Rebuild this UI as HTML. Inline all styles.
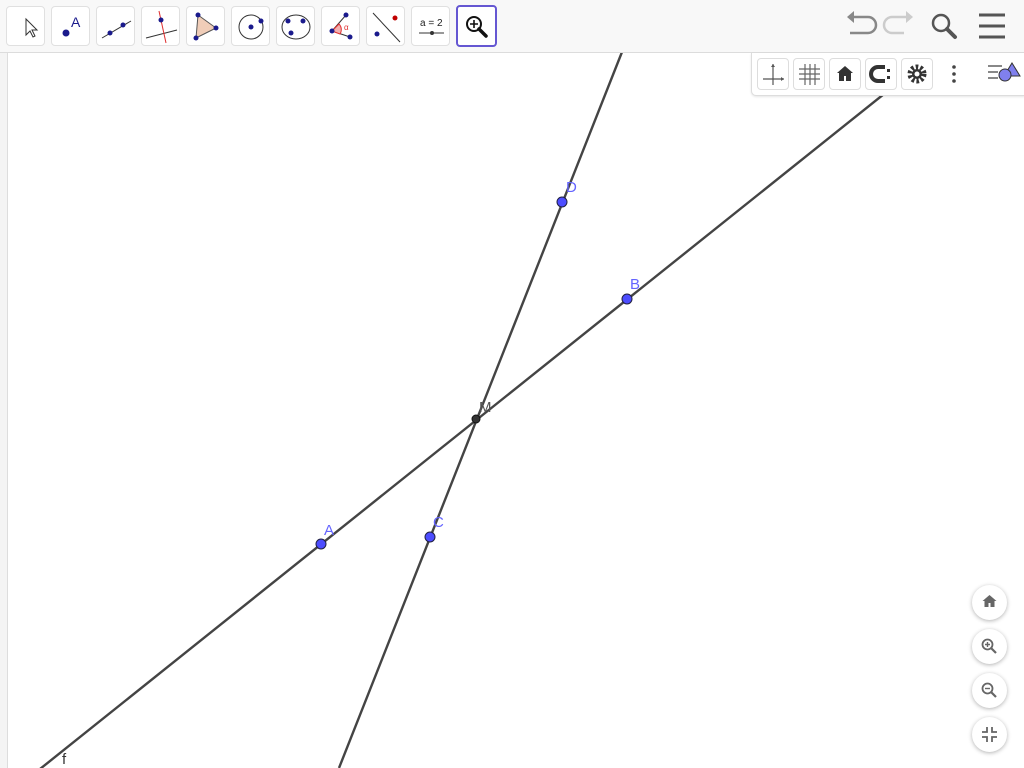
<!DOCTYPE html>
<html><head><meta charset="utf-8"><style>
body{margin:0;width:1024px;height:768px;overflow:hidden;background:#fff;font-family:"Liberation Sans",sans-serif;position:relative}
#tb{position:absolute;left:0;top:0;width:1024px;height:52px;background:#f8f8f8;border-bottom:1px solid #dcdcdc}
.b{position:absolute;top:6px;width:37px;height:38px;background:#fff;border:1px solid #e0e0e0;border-radius:4px}
.b svg{position:absolute;left:0;top:0}
#strip{position:absolute;left:0;top:53px;width:7px;height:715px;background:#f4f4f4;border-right:1px solid #ddd}
#panel{position:absolute;left:751px;top:53px;width:273px;height:42px;background:#fff;border:1px solid #ddd;border-right:none;border-top:none;border-radius:0 0 0 5px;box-shadow:0 1px 2px rgba(0,0,0,.1)}
.p{position:absolute;top:5px;width:30px;height:30px;border:1px solid #ddd;border-radius:4px;background:#fff}
.p svg{position:absolute;left:0;top:0}
.c{position:absolute;left:972px;width:35px;height:35px;border-radius:50%;background:#fff;box-shadow:0 1px 4px rgba(0,0,0,.3)}
.c svg{position:absolute;left:0;top:0}
</style></head><body>
<svg width="1024" height="768" style="position:absolute;left:0;top:0">
<line x1="30" y1="777" x2="1024" y2="-18" stroke="#444" stroke-width="2.4"/>
<line x1="622" y1="52" x2="339" y2="768" stroke="#444" stroke-width="2.4"/>
<g stroke="#202040" stroke-width="1" fill="#4d4dff">
<circle cx="321" cy="544" r="5"/><circle cx="627" cy="299" r="5"/><circle cx="562" cy="202" r="5"/><circle cx="430" cy="537" r="5"/>
</g>
<circle cx="476" cy="419" r="4" fill="#333" stroke="#111"/>
<g font-family="Liberation Sans" font-size="15" fill="#6464ff">
<text x="324" y="535">A</text><text x="630" y="289">B</text><text x="433" y="527">C</text><text x="566" y="192">D</text>
</g>
<text x="479" y="412" font-size="15" fill="#555" font-family="Liberation Sans">M</text>
<text x="62" y="764" font-size="15" fill="#333" font-family="Liberation Sans">f</text>
</svg>
<div id="strip"></div>
<div id="tb">
<div class="b" style="left:6px"><svg width="38" height="38"><path d="M19 12v16l4-4 3 6 2-1-3-6h5z" fill="#fff" stroke="#333" stroke-width="1"/></svg></div>
<div class="b" style="left:51px"><svg width="38" height="38"><circle cx="14" cy="26" r="3.5" fill="#1a1a8c"/><text x="19" y="20" font-size="14" fill="#1a1a8c" font-family="Liberation Sans">A</text></svg></div>
<div class="b" style="left:96px"><svg width="38" height="38"><line x1="5" y1="31" x2="34" y2="14" stroke="#333"/><circle cx="13" cy="26" r="2.5" fill="#1a1a8c"/><circle cx="26" cy="18" r="2.5" fill="#1a1a8c"/></svg></div>
<div class="b" style="left:141px"><svg width="38" height="38"><line x1="4" y1="31" x2="35" y2="23" stroke="#333"/><line x1="17" y1="4" x2="24" y2="36" stroke="#e03030"/><circle cx="19" cy="13" r="2.5" fill="#1a1a8c"/></svg></div>
<div class="b" style="left:186px"><svg width="38" height="38"><path d="M11 8L29 21 9 31z" fill="#f0cdb8" stroke="#555"/><circle cx="11" cy="8" r="2.5" fill="#1a1a8c"/><circle cx="29" cy="21" r="2.5" fill="#1a1a8c"/><circle cx="9" cy="31" r="2.5" fill="#1a1a8c"/></svg></div>
<div class="b" style="left:231px"><svg width="38" height="38"><circle cx="19" cy="20" r="12" fill="none" stroke="#333"/><circle cx="19" cy="20" r="2.5" fill="#1a1a8c"/><circle cx="29" cy="14" r="2.5" fill="#1a1a8c"/></svg></div>
<div class="b" style="left:276px"><svg width="38" height="38"><ellipse cx="19" cy="20" rx="14" ry="12" fill="none" stroke="#333"/><circle cx="11" cy="14" r="2.5" fill="#1a1a8c"/><circle cx="26" cy="14" r="2.5" fill="#1a1a8c"/><circle cx="14" cy="26" r="2.5" fill="#1a1a8c"/></svg></div>
<div class="b" style="left:321px"><svg width="38" height="38"><path d="M10 24L24 8M10 24L28 30" stroke="#333" fill="none"/><path d="M10 24L17 17A8 8 0 0 1 18 27z" fill="#f3b0b0" stroke="#e03030"/><circle cx="24" cy="8" r="2.5" fill="#1a1a8c"/><circle cx="10" cy="24" r="2.5" fill="#1a1a8c"/><circle cx="28" cy="30" r="2.5" fill="#1a1a8c"/><text x="22" y="23" font-size="8" fill="#e03030">α</text></svg></div>
<div class="b" style="left:366px"><svg width="38" height="38"><line x1="6" y1="6" x2="33" y2="35" stroke="#333"/><circle cx="28" cy="11" r="2.5" fill="#c00000"/><circle cx="10" cy="27" r="2.5" fill="#1a1a8c"/></svg></div>
<div class="b" style="left:411px"><svg width="38" height="38"><text x="8" y="19" font-size="10" fill="#222" font-family="Liberation Sans">a = 2</text><line x1="7" y1="26" x2="32" y2="26" stroke="#333"/><circle cx="20" cy="26" r="2" fill="#333"/></svg></div>
<div class="b" style="left:456px;border:2px solid #6557d2;top:5px"><svg width="38" height="38"><circle cx="16" cy="17" r="7" fill="none" stroke="#111" stroke-width="2"/><path d="M16 13v8M12 17h8" stroke="#111" stroke-width="1.6"/><path d="M21 22l7 7" stroke="#111" stroke-width="3.5" stroke-linecap="round"/></svg></div>
<svg width="180" height="52" style="position:absolute;left:840px;top:0">
<path d="M12 17h16a8 8 0 0 1 0 16H10" fill="none" stroke="#888" stroke-width="2.5"/><path d="M7 17l7-6v12z" fill="#888"/>
<path d="M68 17H52a8 8 0 0 0 0 16h12" fill="none" stroke="#ccc" stroke-width="2.5"/><path d="M73 17l-7-6v12z" fill="#ccc"/>
<circle cx="101" cy="23" r="8" fill="none" stroke="#555" stroke-width="2.5"/><path d="M107 29l8 8" stroke="#555" stroke-width="4" stroke-linecap="round"/>
<path d="M139 15h26M139 26h26M139 37h26" stroke="#555" stroke-width="3"/>
</svg>
</div>
<div id="panel">
<div class="p" style="left:5px"><svg width="30" height="30"><path d="M15 5v21M5 20h21" stroke="#555" stroke-width="1.2"/><path d="M26 20l-3-2v4zM15 5l-2 3h4z" fill="#555"/></svg></div>
<div class="p" style="left:41px"><svg width="30" height="30"><path d="M11 5v21M16 5v21M21 5v21M5 10h21M5 15h21M5 20h21" stroke="#666" stroke-width="1.2"/></svg></div>
<div class="p" style="left:77px"><svg width="30" height="30"><path d="M15 7l-8 7h2v8h5v-5h2v5h5v-8h2z" fill="#333"/></svg></div>
<div class="p" style="left:113px"><svg width="30" height="30"><path d="M19 8h-7a7 7 0 0 0 0 14h7" fill="none" stroke="#333" stroke-width="4"/><rect x="21" y="10" width="3" height="3" fill="#333"/><rect x="21" y="17" width="3" height="3" fill="#333"/></svg></div>
<div class="p" style="left:149px"><svg width="30" height="30"><circle cx="15" cy="15" r="7" fill="none" stroke="#333" stroke-width="5" stroke-dasharray="2.5 2"/><circle cx="15" cy="15" r="5" fill="#333"/><circle cx="15" cy="15" r="2.5" fill="#fff"/></svg></div>
<svg width="20" height="30" style="position:absolute;left:192px;top:6px"><circle cx="10" cy="8" r="1.8" fill="#444"/><circle cx="10" cy="15" r="1.8" fill="#444"/><circle cx="10" cy="22" r="1.8" fill="#444"/></svg>
<svg width="40" height="30" style="position:absolute;left:232px;top:6px"><path d="M4 7h14M4 13h10M4 19h10" stroke="#888" stroke-width="2"/><path d="M28 4l8 13H20z" fill="#8080ee" stroke="#333"/><circle cx="21" cy="16" r="6" fill="#8080ee" stroke="#333"/></svg>
</div>
<div class="c" style="top:585px"><svg width="35" height="35"><path d="M17.5 10l-7 6h2v6h4v-4h2v4h4v-6h2z" fill="#666"/></svg></div>
<div class="c" style="top:629px"><svg width="35" height="35"><circle cx="15.5" cy="15.5" r="5" fill="none" stroke="#666" stroke-width="1.8"/><path d="M15.5 13v5M13 15.5h5" stroke="#666" stroke-width="1.4"/><path d="M19 19l5 5" stroke="#666" stroke-width="2.2"/></svg></div>
<div class="c" style="top:673px"><svg width="35" height="35"><circle cx="15.5" cy="15.5" r="5" fill="none" stroke="#666" stroke-width="1.8"/><path d="M13 15.5h5" stroke="#666" stroke-width="1.4"/><path d="M19 19l5 5" stroke="#666" stroke-width="2.2"/></svg></div>
<div class="c" style="top:717px"><svg width="35" height="35"><path d="M15 10v5h-5M20 10v5h5M15 25v-5h-5M20 25v-5h5" fill="none" stroke="#666" stroke-width="1.8"/></svg></div>
</body></html>
